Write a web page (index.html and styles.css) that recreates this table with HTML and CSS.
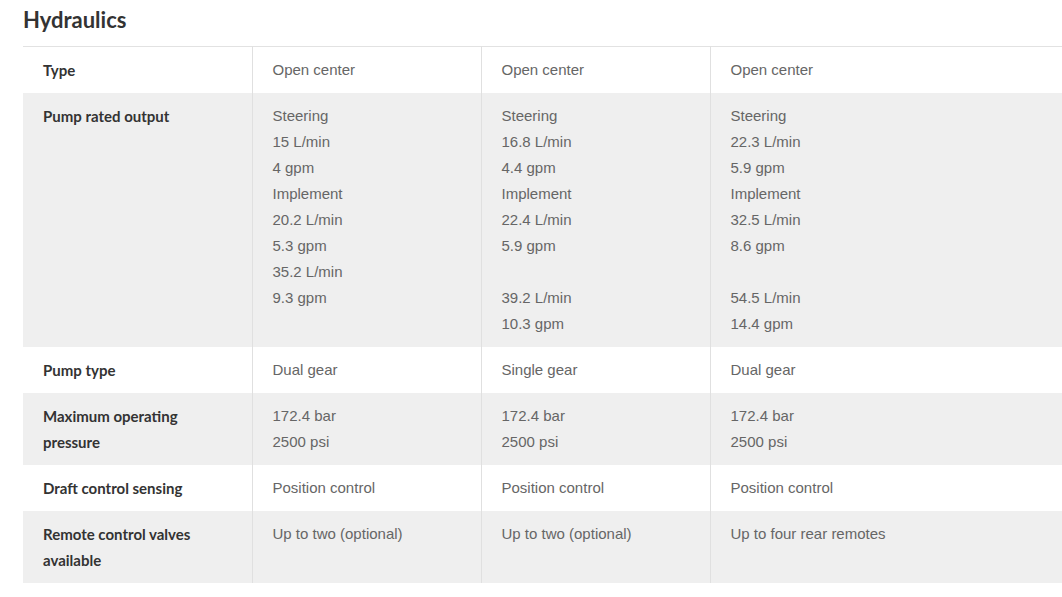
FILE: index.html
```html
<!DOCTYPE html>
<html>
<head>
<meta charset="utf-8">
<link rel="stylesheet" href="styles.css">
</head>
<body>
<section class="specs">
  <h2 class="specs-title">Hydraulics</h2>
  <table class="spec-table">
    <colgroup>
      <col class="c-label"><col class="c-val"><col class="c-val"><col>
    </colgroup>
    <tbody>
      <tr>
        <th>Type</th>
        <td>Open center</td>
        <td>Open center</td>
        <td>Open center</td>
      </tr>
      <tr class="alt">
        <th>Pump rated output</th>
        <td>Steering<br>15 L/min<br>4 gpm<br>Implement<br>20.2 L/min<br>5.3 gpm<br>35.2 L/min<br>9.3 gpm</td>
        <td>Steering<br>16.8 L/min<br>4.4 gpm<br>Implement<br>22.4 L/min<br>5.9 gpm<br><br>39.2 L/min<br>10.3 gpm</td>
        <td>Steering<br>22.3 L/min<br>5.9 gpm<br>Implement<br>32.5 L/min<br>8.6 gpm<br><br>54.5 L/min<br>14.4 gpm</td>
      </tr>
      <tr>
        <th>Pump type</th>
        <td>Dual gear</td>
        <td>Single gear</td>
        <td>Dual gear</td>
      </tr>
      <tr class="alt">
        <th>Maximum operating pressure</th>
        <td>172.4 bar<br>2500 psi</td>
        <td>172.4 bar<br>2500 psi</td>
        <td>172.4 bar<br>2500 psi</td>
      </tr>
      <tr>
        <th>Draft control sensing</th>
        <td>Position control</td>
        <td>Position control</td>
        <td>Position control</td>
      </tr>
      <tr class="alt">
        <th>Remote control valves available</th>
        <td>Up to two (optional)</td>
        <td>Up to two (optional)</td>
        <td>Up to four rear remotes</td>
      </tr>
    </tbody>
  </table>
</section>
</body>
</html>
```
FILE: styles.css
```css
html, body {
  margin: 0;
  padding: 0;
  background: #ffffff;
}
.specs {
  padding-left: 23px;
}
.specs-title {
  margin: 0 0 6px 0;
  font-family: "Lato", "Open Sans", sans-serif;
  font-weight: 700;
  font-size: 22px;
  line-height: 40px;
  color: #333333;
}
.spec-table {
  width: 100%;
  border-collapse: collapse;
  table-layout: fixed;
  border-top: 1px solid #e2e2e2;
}
.c-label { width: 229px; }
.c-val { width: 229px; }
.spec-table th,
.spec-table td {
  vertical-align: top;
  text-align: left;
  padding: 10px 20px;
  line-height: 26px;
}
.spec-table th {
  font-family: "Lato", "Open Sans", sans-serif;
  font-weight: 700;
  font-size: 15px;
  color: #333333;
  padding-right: 40px;
}
.spec-table td {
  font-family: "Liberation Sans", Arial, sans-serif;
  font-size: 15px;
  color: #666666;
  border-left: 1px solid #e0e0e0;
}
.spec-table tr.alt th,
.spec-table tr.alt td {
  background: #efefef;
}
```
